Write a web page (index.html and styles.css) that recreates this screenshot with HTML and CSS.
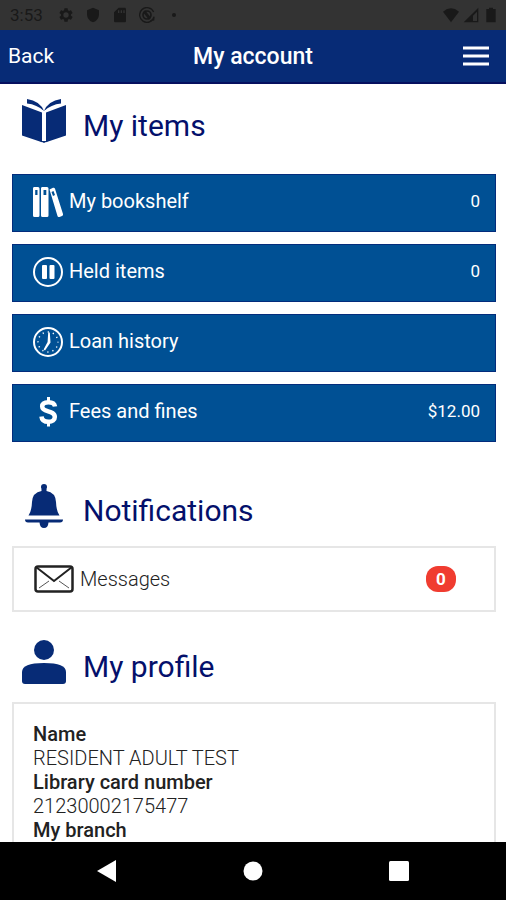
FILE: index.html
```html
<!DOCTYPE html>
<html lang="en">
<head>
    <meta charset="UTF-8">
    <meta name="viewport" content="width=device-width, initial-scale=1.0">
    <title>My account</title>
    <link rel="stylesheet" href="styles.css">
</head>
<body>

    <div class="status-bar">
        <span class="time">3:53</span>
        <svg class="status-icon" viewBox="0 0 24 24"><path fill-rule="evenodd" d="M19.4 13a7.600 7.600 0 0 0 0-2l2.200-1.600a.5.5 0 0 0 .1-.7l-2-3.500a.5.5 0 0 0-.6-.2l-2.500 1a7.300 7.300 0 0 0-1.700-1l-.4-2.600a.5.5 0 0 0-.5-.4h-4a.5.5 0 0 0-.5.4L9.100 5a7.700 7.700 0 0 0-1.700 1l-2.500-1a.5.5 0 0 0-.6.200l-2 3.500a.5.5 0 0 0 .1.7L4.600 11a7.900 7.900 0 0 0 0 2l-2.200 1.600a.5.5 0 0 0-.1.700l2 3.500c.1.200.4.300.6.200l2.500-1a7.300 7.300 0 0 0 1.700 1l.4 2.600c0 .2.200.4.500.4h4c.3 0 .5-.2.5-.4l.4-2.600a7.700 7.700 0 0 0 1.700-1l2.500 1c.2.100.5 0 .6-.2l2-3.500a.5.5 0 0 0-.1-.7zM12 16a4 4 0 1 1 0-8 4 4 0 0 1 0 8z"/></svg>
        <svg class="status-icon" viewBox="0 0 24 24"><path d="M12 1 3 5v6c0 5.500 3.800 10.700 9 12 5.200-1.300 9-6.500 9-12V5z"/></svg>
        <svg class="status-icon" viewBox="0 0 24 24"><path fill-rule="evenodd" d="M19 1h-9L3 8v13c0 1 1 2 2 2h14c1 0 2-1 2-2V3c0-1-1-2-2-2zM9 5h2v4H9zm4 0h2v4h-2zm4 0h2v4h-2z"/></svg>
        <svg class="status-icon" viewBox="0 0 24 24"><path d="M22.500 15A11 11 0 1 1 22 7.500M17 20.500l5-1 .5-5" fill="none" stroke="#191919" stroke-width="2"/><circle cx="12" cy="12" r="6" fill="none" stroke="#191919" stroke-width="2.500"/><path d="m6 8 3-3 9 11-3 3z"/></svg>
        <svg class="status-icon" viewBox="0 0 24 24"><circle cx="12" cy="12" r="3"/></svg>
        <div class="status-right">
            <svg class="status-icon" viewBox="0 0 24 24"><path d="M12 23 0 7q12-10 24 0z"/></svg>
            <svg class="status-icon" viewBox="0 0 24 24"><path fill-rule="evenodd" d="M23 1v22H1zm-2 6-6 6v8h6z"/></svg>
            <svg class="status-icon" viewBox="0 0 24 24"><path d="M9 1h6v2h4v20H5V3h4z"/></svg>
        </div>
    </div>

    <header class="app-bar">
        <a href="#" class="back">Back</a>
        <h1>My account</h1>
        <button class="menu-btn" aria-label="Menu">
            <svg viewBox="0 0 26 20"><path d="M0 2h26M0 10h26M0 18h26" stroke="#fff" stroke-width="3"/></svg>
        </button>
    </header>

    <main class="content">
        <section>
            <div class="section-title">
                <svg viewBox="0 0 44 44"><path d="M0 6 20 13.500V43.300L0 36.500zM44 6 24 13.500V43.300l20-6.800z"/><path d="M5 0q13 2 17 12Q15 5.500 5 4.500zM39 0Q26 2 22 12q7-6.500 17-7.500z"/><path d="m18 42 4 2 4-2z"/></svg>
                <h2>My items</h2>
            </div>
            <nav class="item-list">
                <a href="#" class="item">
                    <svg viewBox="0 0 30 30"><path fill-rule="evenodd" d="M1 0h4q1.500 0 1.500 1.500v27Q6.500 30 5 30H1.500Q0 30 0 28.500v-27Q0 0 1 0zm1.200 3v5h2.300V3zM9 0h5q1.500 0 1.500 1.500v27Q15.500 30 14 30H9.500Q8 30 8 28.500v-27Q8 0 9 0zm1.500 3v5h2.800V3zM16.500 2.500l3.500-1.700q1.500-.5 2 1L30 27q.3 1.500-1 2l-2.500 1q-1.500.3-2-1zM18.500 5l1.500 4 2-1-1.500-4z"/></svg>
                    <span class="item-name">My bookshelf</span>
                    <span class="item-value">0</span>
                </a>
                <a href="#" class="item">
                    <svg viewBox="0 0 30 30"><circle cx="15" cy="15" r="14" fill="none" stroke="#fff" stroke-width="2"/><rect x="9" y="8" width="5" height="14" rx="1"/><rect x="16.500" y="8" width="5" height="14" rx="1"/></svg>
                    <span class="item-name">Held items</span>
                    <span class="item-value">0</span>
                </a>
                <a href="#" class="item">
                    <svg viewBox="0 0 30 30"><circle cx="15" cy="15" r="14" fill="none" stroke="#fff" stroke-width="2"/><circle cx="15" cy="15" r="10" fill="none" stroke="#fff" stroke-width="1.500" stroke-dasharray="1.200 4.036" stroke-dashoffset=".6"/><path d="M15.200 5.500h1.600l.7 10-5.500 8-1.400-1 4-7.500z"/></svg>
                    <span class="item-name">Loan history</span>
                </a>
                <a href="#" class="item">
                    <svg viewBox="0 0 30 30"><path d="M22 9.500C21.500 6.500 19 5.200 15.500 5.200c-4 0-6.300 1.700-6.300 4.300 0 6.500 12.600 3.200 12.600 10.500 0 3-2.500 4.800-6.300 4.800-4 0-6.700-1.800-7-5.300" fill="none" stroke="#fff" stroke-width="4.500"/><path d="M14 0h3v6h-3zM14 24h3v5.500h-3z"/></svg>
                    <span class="item-name">Fees and fines</span>
                    <span class="item-value">$12.00</span>
                </a>
            </nav>
        </section>

        <section>
            <div class="section-title">
                <svg viewBox="0 0 44 44"><circle cx="22" cy="3" r="3"/><path d="M19.500 5h5v2q9 1.500 9.500 11 .3 9 3.500 13.500H6.500Q9.700 27 10 18q.5-9.500 9.500-11zM3 35.500h38q0 3-3 3H26.500q-.5 5.500-4.500 5.500t-4.500-5.500H6q-3 0-3-3z"/></svg>
                <h2>Notifications</h2>
            </div>
            <a href="#" class="card messages">
                <svg viewBox="0 0 40 28"><rect x="1.500" y="1.500" width="37" height="25" rx="2.500" fill="none" stroke="#222" stroke-width="2.500"/><path d="m2 2 18 14L38 2" fill="none" stroke="#222" stroke-width="2"/><path d="m5 23 10-7M35 23l-10-7" stroke="#555"/></svg>
                <span class="messages-name">Messages</span>
                <span class="badge">0</span>
            </a>
        </section>

        <section>
            <div class="section-title">
                <svg viewBox="0 0 44 44"><circle cx="22" cy="10" r="10"/><path d="M0 41v-9q0-9 22-9t22 9v9q0 3-3 3H3q-3 0-3-3z"/></svg>
                <h2>My profile</h2>
            </div>
            <dl class="card profile">
                <dt>Name</dt>
                <dd>RESIDENT ADULT TEST</dd>
                <dt>Library card number</dt>
                <dd>21230002175477</dd>
                <dt>My branch</dt>
            </dl>
        </section>
    </main>

    <div class="nav-bar">
        <button aria-label="Back"><svg viewBox="0 0 22 22"><path d="M20 0v22L1 11z"/></svg></button>
        <button aria-label="Home"><svg viewBox="0 0 22 22"><circle cx="11" cy="11" r="9.500"/></svg></button>
        <button aria-label="Recent apps"><svg viewBox="0 0 22 22"><rect x="1" y="1" width="20" height="20" rx="1.500"/></svg></button>
    </div>

</body>
</html>
```
FILE: styles.css
```css
* { box-sizing: border-box; }
body { font-family: Roboto, Arial, sans-serif; margin: 0; height: 100vh; display: flex; flex-direction: column; background-color: #fff; color: #222; }
a { color: inherit; text-decoration: none; }
button { background: none; border: none; padding: 0; cursor: pointer; }
svg { display: block; flex: none; }

.status-bar { display: flex; align-items: center; gap: 11px; height: 30px; flex: none; padding: 0 7px 0 10px; background-color: #333; color: #191919; }
.time { font-size: 17px; margin-right: 4px; }
.status-icon { width: 16px; height: 16px; fill: #191919; }
.status-right { display: flex; gap: 4px; margin-left: auto; }

.app-bar { display: grid; grid-template-columns: 1fr auto 1fr; align-items: center; height: 54px; flex: none; padding: 0 8px; background-color: #072b76; border-bottom: 2px solid #06105f; color: #fff; }
.back { font-size: 21px; }
.app-bar h1 { margin: 0; font-size: 23px; font-weight: 500; }
.menu-btn { justify-self: end; padding-right: 9px; }
.menu-btn svg { width: 26px; height: 20px; }

.content { flex: 1; min-height: 0; overflow: hidden; padding: 0 10px 0 12px; }
.section-title { display: flex; align-items: flex-end; gap: 17px; padding: 28px 10px 18px; }
.section-title svg { width: 44px; height: 44px; fill: #072b76; }
.section-title h2 { margin: 0; font-size: 30px; line-height: 34px; font-weight: 400; color: #04106b; }

.item-list { display: flex; flex-direction: column; gap: 12px; padding-bottom: 14px; }
.item { display: flex; gap: 6px; height: 58px; padding: 12px 15px 0 20px; background-color: #005094; border: 1px solid #032c7c; color: #fff; }
.item svg { width: 30px; height: 30px; fill: #fff; }
.item-name { font-size: 20px; line-height: 28px; }
.item-value { margin-left: auto; font-size: 17px; line-height: 28px; }
section:first-child .section-title { padding-top: 15px; padding-bottom: 31px; }

.card { border: 2px solid #e6e6e6; background-color: #fff; }
.messages { display: flex; align-items: center; gap: 6px; height: 66px; padding: 0 38px 0 20px; }
.messages svg { width: 40px; height: 28px; }
.messages-name { font-size: 20px; font-weight: 300; }
.badge { margin-left: auto; min-width: 30px; padding: 0 8px; border-radius: 12px; background-color: #f03c30; color: #fff; font-size: 17px; font-weight: 700; line-height: 26px; text-align: center; }
.profile { margin: 0; padding: 18px 19px; font-size: 20px; line-height: 24px; }
.profile dt { font-weight: 500; }
.profile dd { margin: 0; font-weight: 300; }

.nav-bar { display: flex; justify-content: center; align-items: center; gap: 124px; height: 58px; flex: none; background-color: #000; }
.nav-bar svg { width: 22px; height: 22px; fill: #fff; }
```
